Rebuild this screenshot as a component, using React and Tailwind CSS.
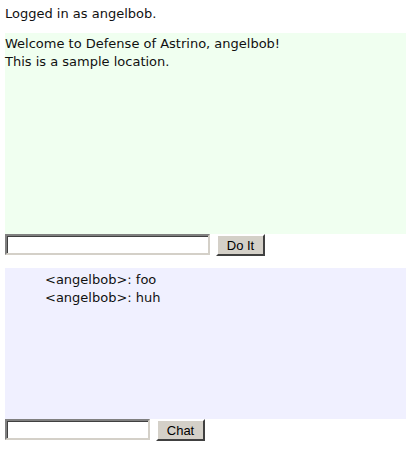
import React, { useState } from "react";

const App = () => {
  const [cmd, setCmd] = useState("");
  const [msg, setMsg] = useState("");
  const lines = ["<angelbob>: foo", "<angelbob>: huh"];

  return (
    <div className="w-[406px] min-h-[458px] bg-white pl-[5px] pt-[5px] text-[13px] leading-[18px] text-[#111] font-['DejaVu_Sans',Verdana,sans-serif]">
      <p>Logged in as angelbob.</p>

      {/* location text */}
      <div className="mt-[10px] h-[201px] bg-[#f0fff0] pt-[2px]">
        <p>Welcome to Defense of Astrino, angelbob!</p>
        <p>This is a sample location.</p>
      </div>

      <form className="flex items-start gap-[6px]" onSubmit={(e) => e.preventDefault()}>
        <input
          type="text"
          value={cmd}
          onChange={(e) => setCmd(e.target.value)}
          className="w-[205px] h-[21px] bg-white border-2 border-t-[#808080] border-l-[#808080] border-b-[#d4d0c8] border-r-[#d4d0c8] outline-none shadow-[inset_1px_1px_0_#404040]"
        />
        <button
          type="submit"
          className="w-[49px] h-[22px] bg-[#d4d0c8] border-2 border-t-white border-l-white border-b-[#404040] border-r-[#404040] text-[13px] leading-none text-black font-['Liberation_Sans',Arial,sans-serif]"
        >
          Do It
        </button>
      </form>

      {/* chat log */}
      <div className="mt-[12px] h-[151px] bg-[#f0f0ff] pt-[3px] pl-[40px]">
        {lines.map((l) => (
          <p key={l}>{l}</p>
        ))}
      </div>

      <form className="flex items-start gap-[6px]" onSubmit={(e) => e.preventDefault()}>
        <input
          type="text"
          value={msg}
          onChange={(e) => setMsg(e.target.value)}
          className="w-[145px] h-[21px] bg-white border-2 border-t-[#808080] border-l-[#808080] border-b-[#d4d0c8] border-r-[#d4d0c8] outline-none shadow-[inset_1px_1px_0_#404040]"
        />
        <button
          type="submit"
          className="w-[49px] h-[22px] bg-[#d4d0c8] border-2 border-t-white border-l-white border-b-[#404040] border-r-[#404040] text-[13px] leading-none text-black font-['Liberation_Sans',Arial,sans-serif]"
        >
          Chat
        </button>
      </form>
    </div>
  );
};

export default App;
